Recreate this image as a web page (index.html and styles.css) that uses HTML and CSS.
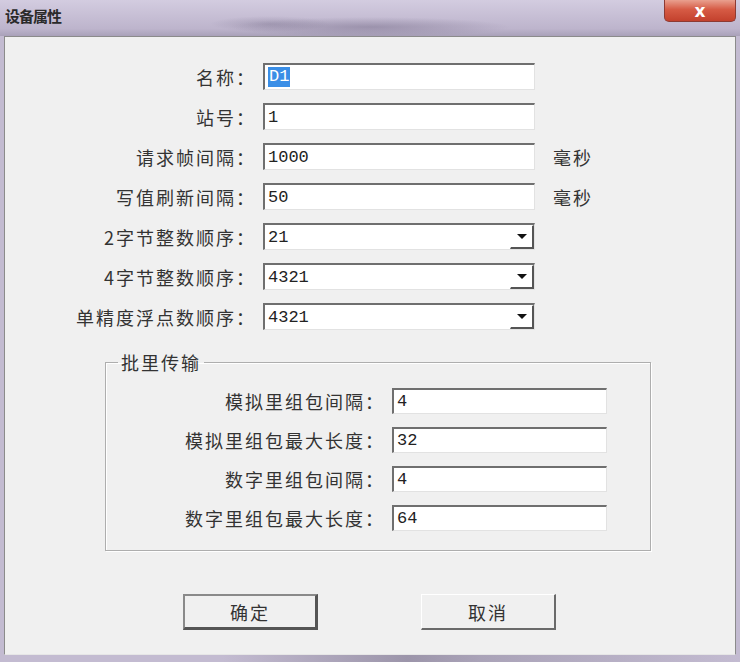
FILE: index.html
```html
<!DOCTYPE html>
<html>
    <head>
        <title>设备属性</title>
        <link rel="stylesheet" href="styles.css">
    </head>
    <body>
        <div class="window">
            <div class="titlebar">
                <span class="title">设备属性</span>
                <button class="close">x</button>
            </div>

            <div class="client">
                <div class="row">
                    <label class="label">名称：</label>
                    <div class="field"><span class="selected">D1</span></div>
                </div>
                <div class="row">
                    <label class="label">站号：</label>
                    <div class="field">1</div>
                </div>
                <div class="row">
                    <label class="label">请求帧间隔：</label>
                    <div class="field">1000</div>
                    <span class="unit">毫秒</span>
                </div>
                <div class="row">
                    <label class="label">写值刷新间隔：</label>
                    <div class="field">50</div>
                    <span class="unit">毫秒</span>
                </div>
                <div class="row">
                    <label class="label">2字节整数顺序：</label>
                    <div class="field combo">
                        <span class="combo-value">21</span>
                        <span class="combo-arrow"></span>
                    </div>
                </div>
                <div class="row">
                    <label class="label">4字节整数顺序：</label>
                    <div class="field combo">
                        <span class="combo-value">4321</span>
                        <span class="combo-arrow"></span>
                    </div>
                </div>
                <div class="row">
                    <label class="label">单精度浮点数顺序：</label>
                    <div class="field combo">
                        <span class="combo-value">4321</span>
                        <span class="combo-arrow"></span>
                    </div>
                </div>

                <fieldset class="group">
                    <legend class="group-title">批里传输</legend>
                    <div class="group-body">
                        <div class="row small">
                            <label class="label">模拟里组包间隔：</label>
                            <div class="field">4</div>
                        </div>
                        <div class="row small">
                            <label class="label">模拟里组包最大长度：</label>
                            <div class="field">32</div>
                        </div>
                        <div class="row small">
                            <label class="label">数字里组包间隔：</label>
                            <div class="field">4</div>
                        </div>
                        <div class="row small">
                            <label class="label">数字里组包最大长度：</label>
                            <div class="field">64</div>
                        </div>
                    </div>
                </fieldset>

                <div class="buttons">
                    <button class="btn btn-default">确定</button>
                    <button class="btn">取消</button>
                </div>
            </div>

            <div class="bottom-strip"></div>
        </div>
    </body>
</html>
```

FILE: styles.css
```css
body {
    margin: 0;
    background-color: #c3bbd1;
    font-family: "Noto Sans CJK SC", "Noto Sans", sans-serif;
}

.window {
    width: 740px;
    height: 662px;
    display: flex;
    flex-direction: column;
    overflow: hidden;
}

/* title bar, a bit blurry in the shot */
.titlebar {
    height: 36px;
    display: flex;
    align-items: flex-start;
    background:
        radial-gradient(ellipse 140px 10px at 370px 27px, rgba(90, 80, 110, 0.35), transparent),
        radial-gradient(ellipse 60px 8px at 270px 24px, rgba(90, 80, 110, 0.25), transparent),
        linear-gradient(to bottom, #d3cce0, #bdb4cc 80%, #a9a1b9);
}
.title {
    margin: 5px 0 0 5px;
    font-size: 15px;
    font-weight: bold;
    color: #2a2a2a;
    letter-spacing: -1px;
}
.close {
    margin-left: auto;
    margin-right: 4px;
    width: 72px;
    height: 22px;
    border: 1px solid #8d3a33;
    border-top: none;
    border-radius: 0 0 5px 5px;
    background: linear-gradient(to bottom, #e9a08f, #d65b45 45%, #c3412d);
    color: white;
    font-family: "DejaVu Sans", sans-serif;
    font-size: 17px;
    font-weight: bold;
    line-height: 18px;
    padding: 0;
}

.client {
    height: 619px;
    box-sizing: border-box;
    margin: 0 4px;
    padding-top: 26px;
    background-color: #f0f0f0;
    border: 1px solid #8b8b8b;
    border-bottom-color: #e6e6e6;
}

.bottom-strip {
    flex: 1;
    background: linear-gradient(to right, #c3bbd1 30%, #9c95aa 55%, #aaa3b8 65%, #c3bbd1);
}

.row {
    display: flex;
    align-items: center;
    height: 27px;
    margin-bottom: 13px;
}

.label {
    width: 251px;
    margin-right: 7px;
    text-align: right;
    font-size: 18px;
    letter-spacing: 2px;
    color: #333;
    white-space: nowrap;
}

.field {
    width: 272px;
    height: 27px;
    box-sizing: border-box;
    display: flex;
    align-items: center;
    padding-left: 3px;
    background-color: white;
    border-top: 2px solid #6f6f6f;
    border-left: 2px solid #6f6f6f;
    border-right: 1px solid #e2e2e2;
    border-bottom: 1px solid #e2e2e2;
    font-family: "Liberation Mono", monospace;
    font-size: 17px;
    color: #222;
}

.selected {
    background-color: #3a8ee6;
    color: white;
    padding: 0 1px;
    line-height: 20px;
}

.unit {
    margin-left: 18px;
    font-size: 18px;
    letter-spacing: 2px;
    color: #333;
}

.combo {
    padding-right: 0;
}
.combo-value {
    flex: 1;
}
.combo-arrow {
    width: 24px;
    height: 100%;
    box-sizing: border-box;
    border-right: 2px solid #555;
    border-bottom: 2px solid #555;
    border-top: 1px solid #fff;
    border-left: 1px solid #fff;
    display: flex;
    align-items: center;
    justify-content: center;
}
.combo-arrow::after {
    content: "";
    border-left: 5px solid transparent;
    border-right: 5px solid transparent;
    border-top: 5px solid #111;
}

/* 批里传输 box */
.group {
    width: 546px;
    box-sizing: border-box;
    margin: 22px 0 0 100px;
    padding: 0 0 19px 0;
    border: 1px solid #aeaeae;
    box-shadow: inset 1px 1px 0 #fff, 1px 1px 0 #fff;
}
.group-title {
    margin-left: 12px;
    padding: 0 3px;
    font-size: 18px;
    line-height: 20px;
    letter-spacing: 2px;
    color: #333;
}
.group-body {
    padding-top: 16px;
    display: flex;
    flex-direction: column;
    gap: 13px;
}
.row.small {
    height: 26px;
    margin-bottom: 0;
}
.row.small .label {
    width: 279px;
}
.row.small .field {
    width: 215px;
    height: 26px;
}

.buttons {
    display: flex;
    gap: 103px;
    margin-top: 43px;
    padding-left: 178px;
}
.btn {
    width: 135px;
    height: 36px;
    background-color: #f0f0f0;
    border-top: 1px solid #fff;
    border-left: 1px solid #fff;
    border-right: 2px solid #6a6a6a;
    border-bottom: 2px solid #6a6a6a;
    font-family: "Noto Sans CJK SC", sans-serif;
    font-size: 18px;
    letter-spacing: 2px;
    color: #333;
}
.btn-default {
    border-top: 2px solid #8a8a8a;
    border-left: 2px solid #8a8a8a;
    border-right: 3px solid #555;
    border-bottom: 3px solid #555;
}
```
